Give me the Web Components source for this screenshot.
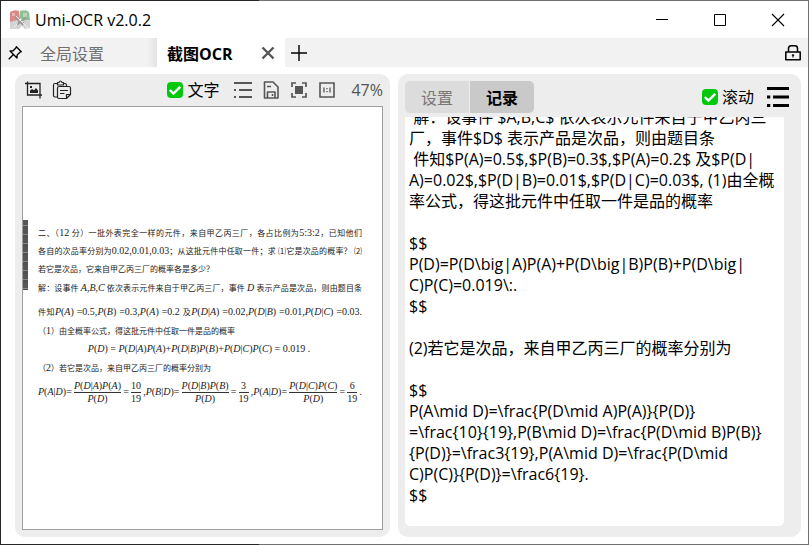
<!DOCTYPE html>
<html lang="zh-CN">
<head>
<meta charset="utf-8">
<title>Umi-OCR</title>
<style>
html, body { margin: 0; height: 100%; }
body { font-family: "Open Sans", "Noto Sans CJK SC", sans-serif; font-size: 16px; color: #000; }
</style>
</head>
<body>
<app-window>
  <title-bar slot="title"></title-bar>
  <tab-strip slot="tabs"></tab-strip>
  <image-panel></image-panel>
  <result-panel></result-panel>
</app-window>
<script>
const define = (name, html, setup) => customElements.define(name, class extends HTMLElement {
  connectedCallback() {
    if (this.shadowRoot) return;
    this.attachShadow({ mode: "open" }).innerHTML = html;
    if (setup) setup(this, this.shadowRoot);
  }
});

const icons = {
  logo: `<path fill="#d98a86" d="M0 2Q5-1 9 1l1 8-4 3H0z"/><path fill="#8fbf95" d="M10 1q6-2 9 1l1 8-7 1-3-3z"/><path fill="#e9b5b2" d="M2 3h3v3H2z"/><path fill="#b9d8bb" d="M13 3h4v4h-4z"/><path fill="#d4d4d4" d="M0 12l7-2 3 2 3-1 7-1v8l-5 1-3-3-3 3H0z"/><path fill="none" stroke="#999" stroke-width="1.6" d="M5 7l8 8M16 7l-9 8M8 12l6 1"/><path fill="none" stroke="#eee" d="M7 14l-3 4M14 14l4 4M6 6l8 8"/>`,
  min: `<path fill="none" stroke="currentColor" d="M4 9.5h12"/>`,
  max: `<path fill="none" stroke="currentColor" d="M4.5 4.5h11v11h-11z"/>`,
  close: `<path fill="none" stroke="currentColor" stroke-width="1.1" d="M4 4l12 12M16 4L4 16"/>`,
  pin: `<path fill="none" stroke="currentColor" stroke-width="1.5" stroke-linejoin="round" d="M11.500 3l5.500 5.500-1.500.6-3 3-.3 3.400-7.700-7.700 3.400-.3 3-3zM8 12l-5 5"/>`,
  cross: `<path fill="none" stroke="currentColor" stroke-width="2.400" d="M4.500 4.500l11 11M15.500 4.500l-11 11"/>`,
  plus: `<path fill="none" stroke="currentColor" stroke-width="1.400" d="M10 2v16M2 10h16"/>`,
  lock: `<path fill="none" stroke="currentColor" stroke-width="1.700" stroke-linejoin="round" d="M2 9h16v8.500H2zM5 9V5q0-3 3-3h4q3 0 3 3v4"/><path stroke="currentColor" stroke-width="1.200" d="M10 11v4M8.700 12.500h2.600"/>`,
  shot: `<path fill="none" stroke="currentColor" stroke-width="1.300" d="M3.500 1.500v13.500H18M1 3.500h15V18.500"/><path fill="currentColor" d="M6 13V10.500l2-1.500 2 1.200L12 8l2 2.500V13zM6 6h2v2H6z"/>`,
  paste: `<path fill="none" stroke="currentColor" stroke-width="1.200" stroke-linejoin="round" d="M5 17H3q-1.500 0-1.500-1.500V5Q1.500 3.500 3 3.500h2.500M14.500 6.500V5q0-1.500-1.500-1.500h-1.500M5.500 2.500h1.500Q8.500-.5 10 2.500h1.500v2.500h-6zM7 6.500h10q1.500 0 1.500 1.500v6.500l-4 4H7q-1.500 0-1.500-1.500V8Q5.500 6.500 7 6.500zM18.500 14.500h-4v4M8 10.500h8M8 13.500h4.500"/>`,
  list: `<path fill="currentColor" d="M1 2h18v2H1zM1 9h2v2H1zM6 9h13v2H6zM1 16h2v2H1zM6 16h13v2H6z"/>`,
  menu: `<path fill="currentColor" d="M0 1h20v2.600H0zM0 8.700h3v2.600H0zM5.500 8.700H20v2.600H5.500zM0 16.400h3V19H0zM5.500 16.400H20V19H5.500z"/>`,
  save: `<path fill="none" stroke="currentColor" stroke-width="1.600" stroke-linejoin="round" d="M3.500 2h8.500l5 5v11H3.500zM6.500 18v-6h7.500v6M6 6.500h4M11.500 14v2"/>`,
  fit: `<path fill="none" stroke="currentColor" stroke-width="1.700" d="M3 7V3h4M13 3h4v4M17 13v4h-4M7 17H3v-4"/><path fill="currentColor" d="M6 6h8v8H6z"/>`,
  one: `<path fill="none" stroke="currentColor" stroke-width="1.600" d="M3 3h14v14H3z"/><path fill="none" stroke="currentColor" stroke-width="1.300" d="M7 7.500v5M13 7.500v5M10 8v1.300M10 11v1.300"/>`,
  tick: `<rect width="20" height="20" rx="5" fill="#00c90d"/><path fill="none" stroke="#fff" stroke-width="3" d="M3.500 10l4.500 4.500L16.500 6"/>`
};
customElements.define("ui-icon", class extends HTMLElement {
  connectedCallback() {
    if (this.shadowRoot) return;
    this.attachShadow({ mode: "open" }).innerHTML =
      `<style>:host{display:block;width:20px;height:20px}svg{display:block;width:100%;height:100%}</style>
       <svg viewBox="0 0 20 20" aria-hidden="true">${icons[this.getAttribute("name")]}</svg>`;
  }
});

const buttonReset = `button{font:inherit;color:inherit;background:none;border:0;padding:0;margin:0;display:grid;place-items:center}`;

define("check-box", `
<style>
:host{display:block}
label{display:flex;align-items:center;gap:4px;line-height:24px}
span{display:grid}
input,ui-icon{grid-area:1/1;width:16px;height:16px;margin:0}
input{appearance:none}
ui-icon{pointer-events:none;visibility:hidden}
input:checked + ui-icon{visibility:visible}
</style>
<label><span><input type="checkbox" checked><ui-icon name="tick"></ui-icon></span><slot></slot></label>`);

define("app-window", `
<style>
:host{display:flex;flex-direction:column;box-sizing:border-box;height:100vh;padding:1px;background:linear-gradient(to right,#262626 32%,#707070 32%)}
main{flex:1;min-height:0;display:grid;grid-template-columns:375fr 403fr;gap:8px;padding:7px 7px 7px 14px;background:#fff}
</style>
<slot name="title"></slot><slot name="tabs"></slot><main><slot></slot></main>`);

define("title-bar", `
<style>
:host{display:flex;align-items:center;height:37px;background:#fff;padding-left:9px}
${buttonReset}
h1{flex:1;margin:0 0 0 5px;font-size:16px;font-weight:400;line-height:24px}
button{width:58px;height:36px}
nav{display:flex;padding-right:1px}
</style>
<ui-icon name="logo"></ui-icon><h1>Umi-OCR v2.0.2</h1>
<nav>
<button aria-label="最小化"><ui-icon name="min"></ui-icon></button>
<button aria-label="最大化"><ui-icon name="max"></ui-icon></button>
<button aria-label="关闭"><ui-icon name="close"></ui-icon></button>
</nav>`);

define("tab-strip", `
<style>
:host{display:flex;height:29px;background:#f2f2f2}
${buttonReset}
.pin{width:28px}.pin ui-icon,.lock ui-icon{width:18px;height:18px}
.idle{width:128px;padding-left:11px;justify-items:start;color:#707070;background:linear-gradient(to right,#f2f2f2 92%,#e4e4e4)}
.active{display:flex;width:128px;background:#fff}
.active .name{flex:1;font-weight:700;padding-left:10px;justify-items:start}
.active .x{width:34px;color:#555}
.add{width:27px}
.lock{width:30px;margin-left:auto}
</style>
<button class="pin" aria-label="置顶"><ui-icon name="pin"></ui-icon></button>
<button class="idle">全局设置</button>
<div class="active"><button class="name">截图OCR</button><button class="x" aria-label="关闭标签"><ui-icon name="cross"></ui-icon></button></div>
<button class="add" aria-label="新标签"><ui-icon name="plus"></ui-icon></button>
<button class="lock" aria-label="锁定"><ui-icon name="lock"></ui-icon></button>`);

define("image-panel", `
<style>
:host{display:flex;flex-direction:column;min-width:0;box-sizing:border-box;background:#ededed;border-radius:10px;padding:0 7px 7px}
${buttonReset}
header{display:flex;align-items:center;height:32px;padding-left:2px;gap:8px;color:#555}
header .dark{color:#222}
check-box{margin-left:auto;color:#000;margin-right:6px}
output{line-height:24px;margin-left:6px}
section{flex:1;display:flex;align-items:center;background:#fff;border:1px solid #a0a0a0}
ocr-page{flex:1;min-width:0}
</style>
<header>
<button class="dark" aria-label="截图"><ui-icon name="shot"></ui-icon></button>
<button class="dark" aria-label="粘贴"><ui-icon name="paste"></ui-icon></button>
<check-box>文字</check-box>
<button aria-label="列表"><ui-icon name="list"></ui-icon></button>
<button aria-label="保存"><ui-icon name="save"></ui-icon></button>
<button aria-label="适应"><ui-icon name="fit"></ui-icon></button>
<button aria-label="原始大小"><ui-icon name="one"></ui-icon></button>
<output>47%</output>
</header>
<section><ocr-page></ocr-page></section>`);

define("ocr-page", `
<style>
:host{display:flex;font:10px/18px "Liberation Serif","Noto Sans CJK SC",serif;color:#222}
.edge{width:5px;height:70px;background:repeating-linear-gradient(#555 0 5px,#888 5px 6px,#505050 6px 9px)}
article{flex:1;min-width:0;padding:4px 20px 9px 10px}
p{margin:0;height:18px;white-space:nowrap}
.full{text-align:justify;text-align-last:justify}
.step{margin-top:1px}.far{margin-top:6px}
.mid{text-align:center;padding-right:2px}
[lang]{font-size:8px}
[lang] i,[lang] b{font-size:10px;font-weight:400}
.row{display:flex;justify-content:space-between;align-items:center;height:30px;margin-top:0}
.frac{display:inline-grid;line-height:12px;text-align:center}
.frac span:first-child{border-bottom:1px solid #333}
</style>
<div class="edge"></div>
<article>
<p class="full" lang="zh">二、（<b>12</b> 分）一批外表完全一样的元件，来自甲乙丙三厂，各占比例为<b>5:3:2</b>，已知他们</p>
<p class="full" lang="zh">各自的次品率分别为<b>0.02,0.01,0.03</b>；从这批元件中任取一件；求 ⑴它是次品的概率？ ⑵</p>
<p class="step" lang="zh">若它是次品，它来自甲乙丙三厂的概率各是多少？</p>
<p class="full" lang="zh">解：设事件 <i>A,B,C</i> 依次表示元件来自于甲乙丙三厂，事件 <i>D</i> 表示产品是次品，则由题目条</p>
<p class="full far"><span lang="zh">件知</span><i>P</i>(<i>A</i>) =0.5,<i>P</i>(<i>B</i>) =0.3,<i>P</i>(<i>A</i>) =0.2 <span lang="zh">及</span><i>P</i>(<i>D</i>|<i>A</i>) =0.02,<i>P</i>(<i>D</i>|<i>B</i>) =0.01,<i>P</i>(<i>D</i>|<i>C</i>) =0.03.</p>
<p class="step" lang="zh">（<b>1</b>）由全概率公式，得这批元件中任取一件是品的概率</p>
<p class="mid"><i>P</i>(<i>D</i>) = <i>P</i>(<i>D</i>|<i>A</i>)<i>P</i>(<i>A</i>)+<i>P</i>(<i>D</i>|<i>B</i>)<i>P</i>(<i>B</i>)+<i>P</i>(<i>D</i>|<i>C</i>)<i>P</i>(<i>C</i>) = 0.019 .</p>
<p class="step" lang="zh">（<b>2</b>）若它是次品，来自甲乙丙三厂的概率分别为</p>
<p class="row">
<span><i>P</i>(<i>A</i>|<i>D</i>)=</span><span class="frac"><span><i>P</i>(<i>D</i>|<i>A</i>)<i>P</i>(<i>A</i>)</span><span><i>P</i>(<i>D</i>)</span></span><span>=</span><span class="frac"><span>10</span><span>19</span></span>
<span>,<i>P</i>(<i>B</i>|<i>D</i>)=</span><span class="frac"><span><i>P</i>(<i>D</i>|<i>B</i>)<i>P</i>(<i>B</i>)</span><span><i>P</i>(<i>D</i>)</span></span><span>=</span><span class="frac"><span>3</span><span>19</span></span>
<span>,<i>P</i>(<i>A</i>|<i>D</i>)=</span><span class="frac"><span><i>P</i>(<i>D</i>|<i>C</i>)<i>P</i>(<i>C</i>)</span><span><i>P</i>(<i>D</i>)</span></span><span>=</span><span class="frac"><span>6</span><span>19</span></span><span>.</span>
</p>
</article>`);

define("result-panel", `
<style>
:host{display:flex;flex-direction:column;min-width:0;min-height:0;box-sizing:border-box;background:#ededed;border-radius:10px;padding:7px 17px 11px 7px}
${buttonReset}
header{display:flex;align-items:center;height:36px}
.tabs{display:flex;gap:1px;height:32px;margin-bottom:4px;border-radius:5px;overflow:hidden}
.tabs button{width:64px;background:#dcdcdc;color:#777}
.tabs .on{background:#c9c9c9;color:#000;font-weight:700}
check-box{margin-left:auto;margin-bottom:4px}
.menu{margin:0 -5px 4px 13px}
.menu ui-icon{width:22px;height:22px}
</style>
<header>
<div class="tabs"><button>设置</button><button class="on">记录</button></div>
<check-box>滚动</check-box>
<button class="menu" aria-label="菜单"><ui-icon name="menu"></ui-icon></button>
</header>
<record-log></record-log>`);

/* The log is scrolled to its end, so its oldest line is partly hidden at the top. */
define("record-log", `
<style>
:host{flex:1;min-height:0;display:flex;flex-direction:column;justify-content:flex-end;overflow:hidden;background:#fff;border-radius:0 0 5px 5px}
div{padding:0 4px 20px;line-height:21px;white-space:pre}
p{margin:0;height:21px}
</style>
<div></div>`, (host, root) => {
  const lines = String.raw` 解：设事件 $A,B,C$ 依次表示元件来自于甲乙丙三
厂，事件$D$ 表示产品是次品，则由题目条
 件知$P(A)=0.5$,$P(B)=0.3$,$P(A)=0.2$ 及$P(D|
A)=0.02$,$P(D|B)=0.01$,$P(D|C)=0.03$, (1)由全概
率公式，得这批元件中任取一件是品的概率

$$
P(D)=P(D\big|A)P(A)+P(D\big|B)P(B)+P(D\big|
C)P(C)=0.019\:.
$$

(2)若它是次品，来自甲乙丙三厂的概率分别为

$$
P(A\mid D)=\frac{P(D\mid A)P(A)}{P(D)}
=\frac{10}{19},P(B\mid D)=\frac{P(D\mid B)P(B)}
{P(D)}=\frac3{19},P(A\mid D)=\frac{P(D\mid
C)P(C)}{P(D)}=\frac6{19}.
$$`.split("\n");
  root.querySelector("div").append(...lines.map(line => {
    const p = document.createElement("p");
    p.textContent = line;
    return p;
  }));
});
</script>
</body>
</html>
